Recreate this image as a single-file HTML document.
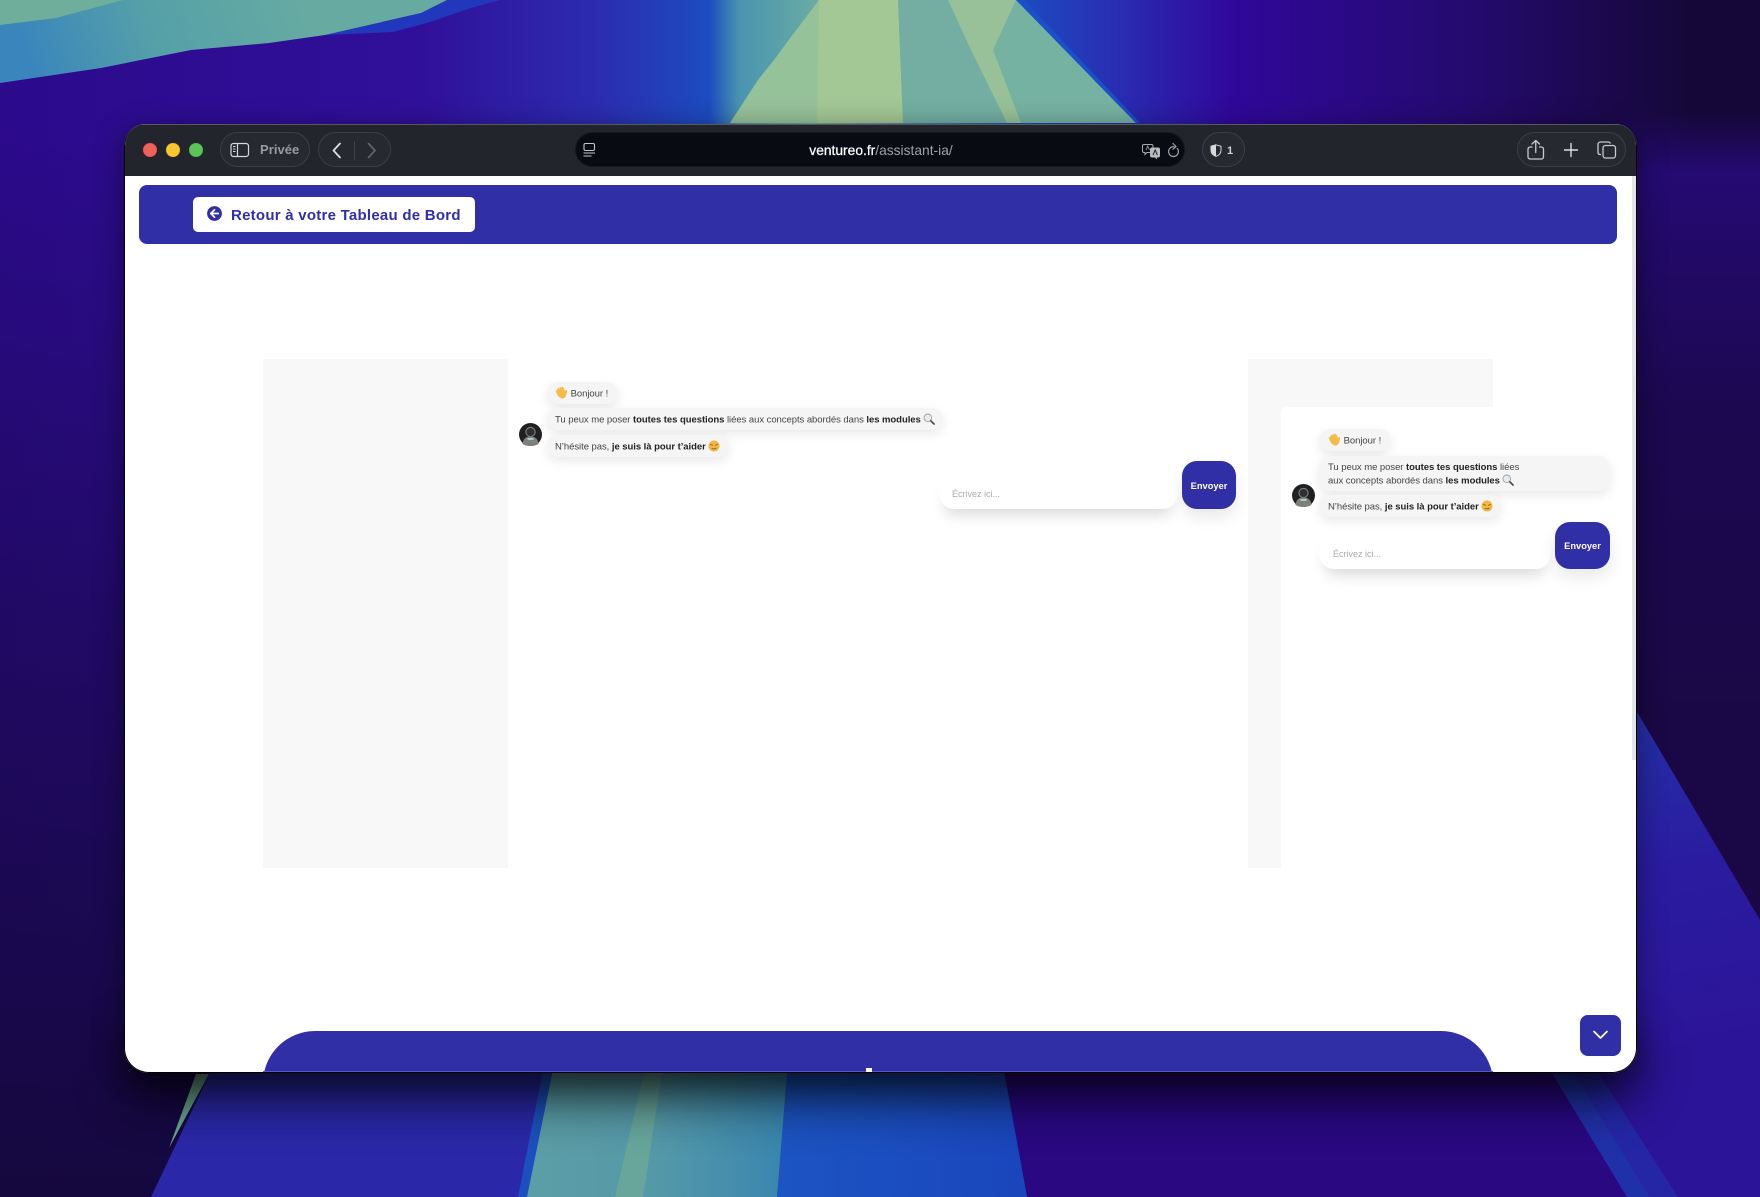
<!DOCTYPE html>
<html lang="fr">
<head>
<meta charset="utf-8">
<title>ventureo.fr/assistant-ia/</title>
<style>
html,body{margin:0;padding:0;width:1760px;height:1197px;overflow:hidden;background:#16083f;font-family:"Liberation Sans",sans-serif}
*{box-sizing:border-box}
#bg{position:absolute;left:0;top:0}
#win{position:absolute;left:124px;top:124px;width:1513px;height:949px;border-radius:22px 22px 25px 25px;box-shadow:0 6px 30px rgba(0,0,0,.45);background:#fff}
#clip{position:absolute;inset:0;border-radius:22px 22px 25px 25px;overflow:hidden;background:#fff;border:1px solid #000;border-top:0}
.abs,.abs0{position:absolute}
#page{position:absolute;left:-125px;top:-124px;width:1760px;height:1197px}
#bar{position:absolute;left:124px;top:124px;width:1513px;height:52px;background:#22252c;border-top:1px solid #56595f}
.pill{position:absolute;top:132px;height:35px;border-radius:18px;border:1px solid #3a3e47;background:#262930}
.dot{position:absolute;top:143px;width:14px;height:14px;border-radius:50%}
.bubble{position:absolute;left:0;background:#f5f5f5;border-radius:11px;box-shadow:0 4px 11px rgba(0,0,0,.09);font-size:9.5px;line-height:13px;color:#444;padding:5px 0 0 8px;white-space:nowrap;letter-spacing:-.05px}
.bubble.first{padding-top:4px}
.bubble.alt{padding-left:9px}
.bubble b{color:#222;font-weight:700}
.bubble svg{vertical-align:-2.5px}
.input{position:absolute;background:#fff;border-radius:15px;box-shadow:0 12px 14px -6px rgba(0,0,0,.14);font-size:9px;color:#aaaab0;white-space:nowrap}
.send{position:absolute;background:#312fa6;border-radius:15px;box-shadow:0 8px 16px rgba(0,0,0,.09);color:#fff;font-weight:700;font-size:9.3px;text-align:center}
</style>
</head>
<body>
<svg id="bg" width="1760" height="1197" viewBox="0 0 1760 1197" xmlns="http://www.w3.org/2000/svg">
  <defs>
    <linearGradient id="top" gradientUnits="userSpaceOnUse" x1="0" y1="0" x2="1760" y2="0">
      <stop offset="0" stop-color="#2c0a8c"/>
      <stop offset=".24" stop-color="#30109a"/>
      <stop offset=".34" stop-color="#2c2cb0"/>
      <stop offset=".403" stop-color="#1c4cc0"/>
      <stop offset=".42" stop-color="#4a94b0"/>
      <stop offset=".465" stop-color="#6aaca4"/>
      <stop offset=".578" stop-color="#1c4cc2"/>
      <stop offset=".64" stop-color="#2a2ab0"/>
      <stop offset=".70" stop-color="#30089a"/>
      <stop offset=".83" stop-color="#250a70"/>
      <stop offset=".96" stop-color="#150838"/>
      <stop offset="1" stop-color="#150838"/>
    </linearGradient>
    <linearGradient id="left" gradientUnits="userSpaceOnUse" x1="0" y1="120" x2="0" y2="1197">
      <stop offset="0" stop-color="#15083e" stop-opacity="0"/>
      <stop offset=".5" stop-color="#15083e" stop-opacity=".55"/>
      <stop offset="1" stop-color="#15083e" stop-opacity="1"/>
    </linearGradient>
    <linearGradient id="right" gradientUnits="userSpaceOnUse" x1="0" y1="112" x2="0" y2="720">
      <stop offset="0" stop-color="#250a72" stop-opacity="0"/>
      <stop offset=".1" stop-color="#250a72" stop-opacity="1"/>
      <stop offset=".5" stop-color="#1c0850" stop-opacity="1"/>
      <stop offset="1" stop-color="#1a0846" stop-opacity="1"/>
    </linearGradient>
    <linearGradient id="rightblue" gradientUnits="userSpaceOnUse" x1="1640" y1="710" x2="1700" y2="1050">
      <stop offset="0" stop-color="#2530a8"/>
      <stop offset=".45" stop-color="#2a1ca0"/>
      <stop offset="1" stop-color="#2c1498"/>
    </linearGradient>
    <linearGradient id="teal" gradientUnits="userSpaceOnUse" x1="40" y1="90" x2="300" y2="0">
      <stop offset="0" stop-color="#3a86bc"/>
      <stop offset=".45" stop-color="#55a0a8"/>
      <stop offset="1" stop-color="#66aaa2"/>
    </linearGradient>
    <linearGradient id="tealbot" gradientUnits="userSpaceOnUse" x1="530" y1="0" x2="780" y2="0">
      <stop offset="0" stop-color="#5c9ea6"/>
      <stop offset=".5" stop-color="#5599a8"/>
      <stop offset="1" stop-color="#3a86ae"/>
    </linearGradient>
    <linearGradient id="bluebot" gradientUnits="userSpaceOnUse" x1="780" y1="0" x2="1020" y2="0">
      <stop offset="0" stop-color="#1c54c2"/>
      <stop offset="1" stop-color="#1a46bc"/>
    </linearGradient>
    <filter id="blur" x="-10%" y="-300%" width="120%" height="700%"><feGaussianBlur stdDeviation="27"/></filter>
  </defs>
  <rect width="1760" height="1197" fill="url(#top)"/>
  <rect x="0" y="120" width="230" height="1077" fill="url(#left)"/>
  <rect x="1620" y="112" width="140" height="1085" fill="url(#right)"/>
  <!-- top-left landscape -->
  <polygon points="447,0 500,0 471,8 427,23 393,32 325,35 421,13" fill="#2138bc"/>
  <polygon points="0,83 101,68 191,50 269,43 325,35 421,13 447,0 0,0" fill="url(#teal)"/>
  <polygon points="0,0 123,0 56,18 0,25" fill="#6fae9a"/>
  <!-- top centre -->
  <polygon points="819,0 1016,0 1055,37 1094,80 1136,123 730,123 758,80 774,60 791,37" fill="#76b2a2"/>
  <polygon points="819,0 898,0 903,123 730,123 758,80 774,60 791,37" fill="#96c29a"/>
  <polygon points="819,0 898,0 903,123 817,123" fill="#a3c795"/>
  <polygon points="898,0 948,0 971,50 1007,123 903,123" fill="#74aea2"/>
  <polygon points="948,0 1016,0 993,50 1021,123 1007,123 971,50" fill="#98c19a"/>
  <polygon points="1016,0 1024,0 1140,123 1136,123" fill="#1a50c8"/>
  <!-- right purple wedge -->
  <polygon points="1630,700 1760,920 1760,1197 1540,1197 1540,700" fill="url(#rightblue)"/>
  <!-- bottom section -->
  <polygon points="1000,1060 1544,1060 1627,1197 1020,1197" fill="#290882"/>
  <polygon points="1544,1060 1627,1197 1650,1197 1566,1060" fill="#2030a8"/>
  <polygon points="1566,1060 1650,1197 1678,1197 1590,1060" fill="#2426a6"/>
  <polygon points="216,1060 1002,1060 1027,1197 151,1197" fill="#2a28a8"/>
  <polygon points="196,1074 209,1074 169,1148" fill="#6aa68a"/>
  <polygon points="545,1060 790,1060 777,1197 518,1197" fill="#1c50c0"/>
  <polygon points="555,1060 790,1060 777,1197 527,1197" fill="url(#tealbot)"/>
  <polygon points="647,1060 664,1060 643,1197 615,1197" fill="#68a69c"/>
  <polygon points="788,1060 1002,1060 1027,1197 777,1197" fill="url(#bluebot)"/>
  <!-- window shadow on the lower landscape -->
  <rect x="128" y="1040" width="1505" height="55" fill="#000" opacity=".8" filter="url(#blur)"/>
</svg>

<div id="win">
<div id="clip">
<div id="page">

  <!-- browser toolbar -->
  <div id="bar"></div>
  <div class="dot" style="left:143px;background:#f1605a;box-shadow:inset 0 0 0 .5px #d8403a"></div>
  <div class="dot" style="left:166px;background:#f8c62e;box-shadow:inset 0 0 0 .5px #d9a51e"></div>
  <div class="dot" style="left:189px;background:#5cc35a;box-shadow:inset 0 0 0 .5px #3fa83f"></div>

  <div class="pill" style="left:220px;width:90px"></div>
  <svg class="abs" style="left:229px;top:142px" width="22" height="16" viewBox="0 0 22 16" fill="none">
    <rect x="2" y="1.500" width="17.500" height="13" rx="2.500" stroke="#d6d8db" stroke-width="1.200"/>
    <path d="M8.500 1.500v13" stroke="#d6d8db" stroke-width="1.200"/>
    <path d="M4 4.500h2.500M4 7h2.500M4 9.500h2.500" stroke="#d6d8db" stroke-width="1.100"/>
  </svg>
  <div class="abs" style="left:260px;top:142px;font-size:13px;line-height:16px;font-weight:700;color:#989ba2;letter-spacing:.05px">Privée</div>

  <div class="pill" style="left:318px;width:73px"></div>
  <svg class="abs" style="left:330px;top:141px" width="52" height="20" viewBox="0 0 52 20" fill="none">
    <path d="M10 2.500 3.500 9.500 10 16.500" stroke="#e2e3e5" stroke-width="1.700" stroke-linecap="round" stroke-linejoin="round"/>
    <path d="M24.500 0v19" stroke="#3e4149" stroke-width="1"/>
    <path d="M38.500 2.500 45 9.500 38.500 16.500" stroke="#62656c" stroke-width="1.700" stroke-linecap="round" stroke-linejoin="round"/>
  </svg>

  <div class="pill" style="left:575px;width:610px;background:#080b12;border-color:#14171e"></div>
  <svg class="abs" style="left:582px;top:142px" width="16" height="16" viewBox="0 0 16 16" fill="none">
    <rect x="2" y="1.500" width="10.500" height="7" rx="1.500" stroke="#c4c6c9" stroke-width="1.100"/>
    <path d="M1.500 11h11.500M1.500 14h8" stroke="#c4c6c9" stroke-width="1.100"/>
  </svg>
  <div class="abs" style="left:720px;top:142px;width:322px;text-align:center;font-size:13.800px;line-height:17px;color:#9ea1a6;white-space:nowrap"><span style="color:#fff;font-weight:400;-webkit-text-stroke:.25px #fff">ventureo.fr</span>/assistant-ia/</div>
  <svg class="abs" style="left:1141px;top:141px" width="40" height="19" viewBox="0 0 40 19" fill="none">
    <path d="M3 3.500h7.500a1.500 1.500 0 0 1 1.500 1.500v5a1.500 1.500 0 0 1-1.500 1.500H6l-2 2v-2H3A1.500 1.500 0 0 1 1.500 10V5A1.500 1.500 0 0 1 3 3.500Z" stroke="#a8aaad" stroke-width="1"/>
    <path d="M11 6.500h6a2 2 0 0 1 2 2v6a2 2 0 0 1-2 2h-1v2l-2-2h-3a2 2 0 0 1-2-2V8.500a2 2 0 0 1 2-2Z" fill="#b9bbbe"/>
    <path d="M5 9l1.700-4 1.700 4" stroke="#a8aaad" stroke-width=".8"/>
    <path d="M12 14l2.200-5 2.200 5" stroke="#22252c" stroke-width="1"/>
    <path d="M36.300 7.500a4.900 4.900 0 1 1-3.400-1.800" stroke="#a4a6a9" stroke-width="1.200" stroke-linecap="round"/>
    <path d="M32 2.500l3 3-3 2.700" stroke="#a4a6a9" stroke-width="1.200" stroke-linecap="round" stroke-linejoin="round"/>
  </svg>

  <div class="pill" style="left:1202px;width:43px"></div>
  <svg class="abs" style="left:1210px;top:144px" width="12" height="13" viewBox="0 0 12 13">
    <path d="M6 .8 11 2.300v3.800c0 3-2 5.200-5 6.300-3-1.100-5-3.300-5-6.300V2.300Z" fill="none" stroke="#d8d9db" stroke-width="1"/>
    <path d="M6 .8v11.600C3 11.300 1 9.100 1 6.100V2.300Z" fill="#d8d9db"/>
  </svg>
  <div class="abs" style="left:1227px;top:144px;font-size:11px;line-height:14px;font-weight:700;color:#d2d3d5">1</div>

  <div class="pill" style="left:1517px;width:109px"></div>
  <svg class="abs" style="left:1526px;top:139px" width="96" height="22" viewBox="0 0 96 22" fill="none">
    <path d="M6.500 8H4.200A2.200 2.200 0 0 0 2 10.200v7.600A2.200 2.200 0 0 0 4.200 20h11.100a2.200 2.200 0 0 0 2.200-2.200v-7.600A2.200 2.200 0 0 0 15.300 8H13" stroke="#c9cbce" stroke-width="1.300"/>
    <path d="M9.750 13.500V1.500M6 5 9.750 1.500 13.500 5" stroke="#c9cbce" stroke-width="1.300" stroke-linecap="round" stroke-linejoin="round"/>
    <path d="M45 4.500v13M38.500 11h13" stroke="#dcdde0" stroke-width="1.400" stroke-linecap="round"/>
    <path d="M75 15.500h-1.500A2.500 2.500 0 0 1 72 13V5.500A2.500 2.500 0 0 1 74.500 3h7.500a2.500 2.500 0 0 1 2.500 1.500" stroke="#c9cbce" stroke-width="1.300"/>
    <rect x="77" y="6.500" width="12.500" height="12.500" rx="2.500" stroke="#c9cbce" stroke-width="1.300"/>
  </svg>

  <!-- site header -->
  <div class="abs" style="left:139px;top:185px;width:1478px;height:59px;background:#312fa6;border-radius:8px"></div>
  <div class="abs" style="left:193px;top:197px;width:282px;height:35px;background:#fff;border-radius:5px"></div>
  <svg class="abs" style="left:207px;top:206px" width="15" height="15" viewBox="0 0 15 15">
    <circle cx="7.500" cy="7.500" r="7.400" fill="#312fa6"/>
    <path d="M7.500 3.800 3.800 7.500l3.700 3.700M4 7.500h7.300" fill="none" stroke="#fff" stroke-width="1.700" stroke-linecap="round" stroke-linejoin="round"/>
  </svg>
  <div class="abs" style="left:231px;top:206px;font-size:15px;line-height:19px;font-weight:700;color:#312fa6;letter-spacing:.25px;white-space:nowrap">Retour à votre Tableau de Bord</div>

  <!-- placeholders -->
  <div class="abs" style="left:263px;top:359px;width:245px;height:509px;background:#f8f8f8"></div>
  <div class="abs" style="left:1248px;top:359px;width:245px;height:509px;background:#f8f8f8"></div>
  <div class="abs" style="left:1281px;top:407px;width:339px;height:461px;background:#fff;border-radius:6px 6px 0 0"></div>

  <!-- chat 1 -->
  <div class="abs" style="left:547px;top:0;width:0;height:0">
    <div class="bubble first" style="top:382px;width:71px;height:22px"><svg width="13" height="13" viewBox="0 0 12 12"><path d="M2.500 1.800c.8-.6 1.500 0 2.100 1L4.100 1.400c.7-.9 1.600-.5 2.100.5L6.200.9c.8-.6 1.500 0 1.800.8l1.400 3.200.6-1c.7-.5 1.500 0 1.200.9l-.7 3C9.900 10.800 8 11.900 6 11.400 3.900 10.900 2.600 9 1.800 7.300L.7 4.800c-.3-.9.700-1.400 1.300-.8Z" fill="#f4bd4a"/></svg> Bonjour !</div>
    <div class="bubble" style="top:408px;width:396px;height:22px">Tu peux me poser <b>toutes tes questions</b> liées aux concepts abordés dans <b>les modules</b> <svg width="12" height="12" viewBox="0 0 12 12" fill="none"><circle cx="4.800" cy="4.800" r="3.800" fill="#e6edf2" stroke="#9aa0a6" stroke-width=".9"/><path d="M7.800 7.800l3.200 3.200" stroke="#444" stroke-width="1.600" stroke-linecap="round"/></svg></div>
    <div class="bubble" style="top:435px;width:182px;height:22px">N’hésite pas, <b>je suis là pour t’aider</b> <svg width="12" height="12" viewBox="0 0 12 12"><circle cx="6" cy="6" r="5.500" fill="#f2b642"/><path d="M2.500 4.500l2 .7M7.500 5.200l2-.7M4 8.500c1.200.6 2.600.5 4-.3" stroke="#9a5c18" stroke-width=".9" fill="none" stroke-linecap="round"/></svg></div>
  </div>
  <svg class="abs" style="left:519px;top:423px" width="23" height="23" viewBox="0 0 23 23">
    <circle cx="11.500" cy="11.500" r="11.500" fill="#1f2022"/>
    <path d="M3.500 21c.5-5 3-7.500 8-7.500s7.500 2.500 8 7.500c-2 1.300-5 2-8 2s-6-.7-8-2Z" fill="#7e8079"/>
    <circle cx="11.500" cy="9" r="4.600" fill="#2e2f30" stroke="#7b7c78" stroke-width="1.200"/>
    <rect x="8.500" y="15" width="6" height="1.800" fill="#a8d4e8"/>
  </svg>
  <div class="input" style="left:939px;top:470px;width:239px;height:39px;padding:19px 0 0 13px">Écrivez ici...</div>
  <div class="send" style="left:1182px;top:461px;width:54px;height:48px;line-height:50px">Envoyer</div>

  <!-- chat 2 -->
  <div class="abs" style="left:1319px;top:0;width:0;height:0">
    <div class="bubble first alt" style="top:429px;width:72px;height:22px"><svg width="13" height="13" viewBox="0 0 12 12"><path d="M2.500 1.800c.8-.6 1.500 0 2.100 1L4.100 1.400c.7-.9 1.600-.5 2.100.5L6.200.9c.8-.6 1.500 0 1.800.8l1.400 3.200.6-1c.7-.5 1.500 0 1.200.9l-.7 3C9.900 10.800 8 11.900 6 11.400 3.900 10.900 2.600 9 1.800 7.300L.7 4.800c-.3-.9.700-1.400 1.300-.8Z" fill="#f4bd4a"/></svg> Bonjour !</div>
    <div class="bubble alt" style="top:456px;width:291px;height:35px">Tu peux me poser <b>toutes tes questions</b> liées<br>aux concepts abordés dans <b>les modules</b> <svg width="12" height="12" viewBox="0 0 12 12" fill="none"><circle cx="4.800" cy="4.800" r="3.800" fill="#e6edf2" stroke="#9aa0a6" stroke-width=".9"/><path d="M7.800 7.800l3.200 3.200" stroke="#444" stroke-width="1.600" stroke-linecap="round"/></svg></div>
    <div class="bubble alt" style="top:495px;width:182px;height:22px">N’hésite pas, <b>je suis là pour t’aider</b> <svg width="12" height="12" viewBox="0 0 12 12"><circle cx="6" cy="6" r="5.500" fill="#f2b642"/><path d="M2.500 4.500l2 .7M7.500 5.200l2-.7M4 8.500c1.200.6 2.600.5 4-.3" stroke="#9a5c18" stroke-width=".9" fill="none" stroke-linecap="round"/></svg></div>
  </div>
  <svg class="abs" style="left:1292px;top:484px" width="23" height="23" viewBox="0 0 23 23">
    <circle cx="11.500" cy="11.500" r="11.500" fill="#1f2022"/>
    <path d="M3.500 21c.5-5 3-7.500 8-7.500s7.500 2.500 8 7.500c-2 1.300-5 2-8 2s-6-.7-8-2Z" fill="#7e8079"/>
    <circle cx="11.500" cy="9" r="4.600" fill="#2e2f30" stroke="#7b7c78" stroke-width="1.200"/>
    <rect x="8.500" y="15" width="6" height="1.800" fill="#a8d4e8"/>
  </svg>
  <div class="input" style="left:1319px;top:530px;width:232px;height:39px;padding:19px 0 0 14px">Écrivez ici...</div>
  <div class="send" style="left:1555px;top:522px;width:55px;height:47px;line-height:49px">Envoyer</div>

  <!-- scrollbar -->
  <div class="abs" style="left:1632px;top:176px;width:4px;height:584px;background:#e3e6e9"></div>

  <!-- bottom hero -->
  <div class="abs" style="left:263px;top:1031px;width:1230px;height:60px;background:#312fa6;border-radius:52px 52px 0 0"></div>
  <div class="abs" style="left:263px;top:1071px;width:1230px;height:1px;background:#5a58c4"></div>
  <div class="abs" style="left:866px;top:1068px;width:6px;height:5px;background:#fff"></div>

  <!-- scroll button -->
  <div class="abs" style="left:1580px;top:1015px;width:41px;height:41px;background:#312fa6;border-radius:8px"></div>
  <svg class="abs" style="left:1592px;top:1029px" width="17" height="12" viewBox="0 0 17 12" fill="none">
    <path d="M2 2.500 8.500 9 15 2.500" stroke="#fff" stroke-width="1.700" stroke-linecap="round" stroke-linejoin="round"/>
  </svg>
</div>
</div>
</div>
</body>
</html>
